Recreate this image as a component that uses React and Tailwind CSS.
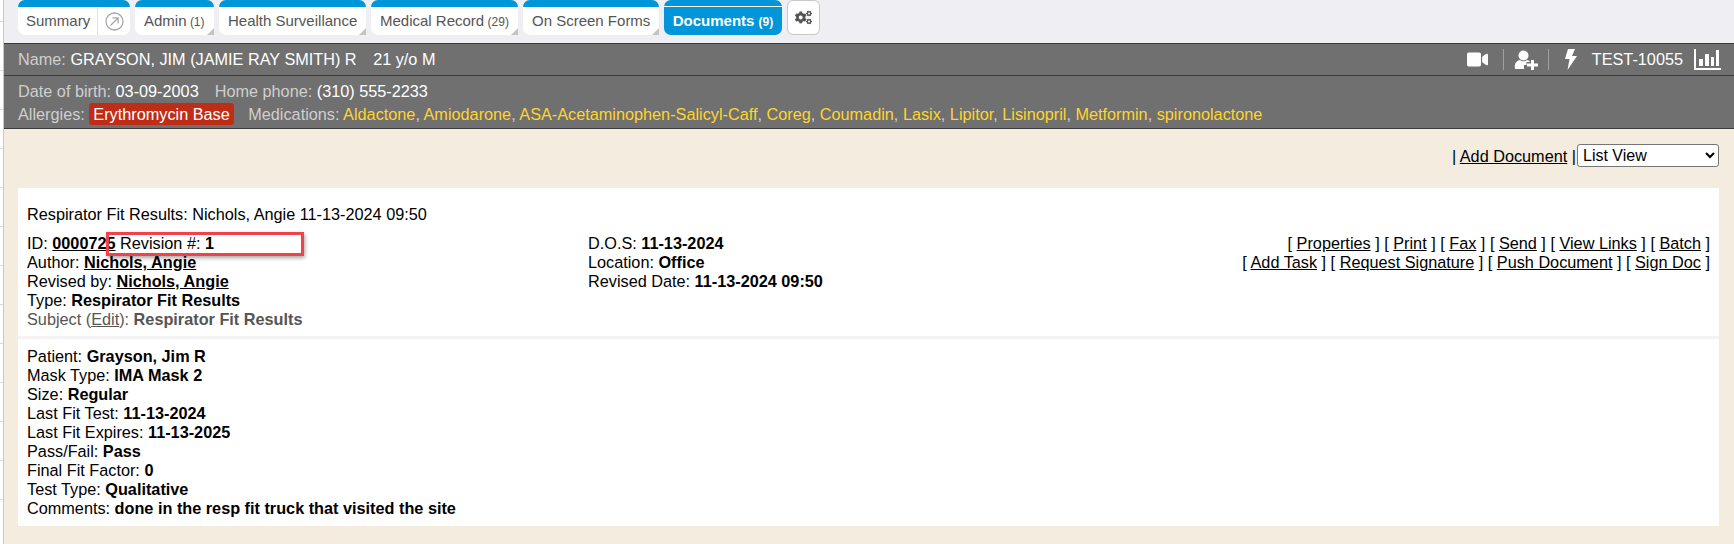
import { FaVideo, FaCogs } from "react-icons/fa";

const tabs = [
  { label: "Admin", count: "(1)", w: "w-[79px]" },
  { label: "Health Surveillance", w: "w-[147px]" },
  { label: "Medical Record", count: "(29)", w: "w-[147px]" },
  { label: "On Screen Forms", w: "w-[136px]" },
];

const meds = [
  "Aldactone",
  "Amiodarone",
  "ASA-Acetaminophen-Salicyl-Caff",
  "Coreg",
  "Coumadin",
  "Lasix",
  "Lipitor",
  "Lisinopril",
  "Metformin",
  "spironolactone",
];

const ticks = [21, 70, 109, 148, 187, 226, 265, 304, 343, 382, 421, 460, 499];

const fitRows = [
  ["Patient", "Grayson, Jim R"],
  ["Mask Type", "IMA Mask 2"],
  ["Size", "Regular"],
  ["Last Fit Test", "11-13-2024"],
  ["Last Fit Expires", "11-13-2025"],
  ["Pass/Fail", "Pass"],
  ["Final Fit Factor", "0"],
  ["Test Type", "Qualitative"],
  ["Comments", "done in the resp fit truck that visited the site"],
];

const Link = ({ children }) => <a className="underline">{children}</a>;

const Actions = ({ items }) => (
  <div>
    {items.map((item, i) => (
      <span key={item}>
        {i > 0 && " "}[ <Link>{item}</Link> ]
      </span>
    ))}
  </div>
);

const Corner = () => (
  <span className="absolute right-0 bottom-0 w-0 h-0 border-l-[7px] border-b-[7px] border-l-transparent border-b-[#c4c4c4]" />
);

const UserAdd = () => (
  <svg width="24" height="20" viewBox="0 0 24 20" fill="white">
    <circle cx="9.5" cy="5.5" r="5" />
    <path d="M1 19 C0 13 3 10.5 6 10 C8 11.8 11 11.8 13 10 C14.5 10.3 15.5 11 16 12 H12.5 V15 H10 V19 Z" />
    <path d="M17 10 H20 V13.5 H24 V16.5 H20 V20 H17 V16.5 H13 V13.5 H17 Z" />
  </svg>
);

const Bolt = () => (
  <svg width="13" height="21" viewBox="0 0 13 21" fill="white">
    <path d="M4 0 H11 L8 7 H13 L3.5 21 L5.5 10 H1 Z" />
  </svg>
);

const Bars = () => (
  <svg width="27" height="21" viewBox="0 0 27 21" fill="white">
    <rect x="0" y="0" width="2" height="21" />
    <rect x="0" y="19" width="27" height="2" />
    <rect x="5" y="10" width="4" height="7" />
    <rect x="11" y="5" width="4" height="12" />
    <rect x="17" y="8" width="3" height="9" />
    <rect x="22" y="1" width="3" height="16" />
  </svg>
);

export default function App() {
  return (
    <div className="flex h-[544px] w-[1734px] overflow-hidden bg-white font-['Liberation_Sans',Arial,sans-serif] text-[16.25px] leading-[19px] text-black">
      {/* left edge of the outer frame */}
      <div className="relative w-1 shrink-0 border-r border-[#c8c8c8]">
        {ticks.map((y) => (
          <div key={y} className="absolute left-0 w-[3px] h-px bg-[#d8d8d8]" style={{ top: y }} />
        ))}
      </div>

      <div className="flex-1 flex flex-col min-w-0">
        {/* Tabs */}
        <div className="h-[43px] bg-[#eeeef3] pl-[14px] flex items-start gap-[5px] shrink-0 text-[15px]">
          <div className="h-[35px] w-[112px] rounded-[7px] bg-white border-t-[7px] border-[#0096d9] flex text-[#555]">
            <span className="w-[79px] pl-[8px] pt-[4px]">Summary</span>
            <span className="flex-1 border-l border-[#e2e2e2] flex items-center justify-center">
              <svg width="19" height="19" viewBox="0 0 19 19" fill="none" stroke="#a8a8a8" strokeWidth="1.3">
                <circle cx="9.5" cy="9.5" r="8.5" />
                <path d="M5.5 13.5 L13 6 M7.5 5.8 H13.2 V11.5" />
              </svg>
            </span>
          </div>
          {tabs.map((t) => (
            <div
              key={t.label}
              className={`relative h-[35px] ${t.w} rounded-t-[7px] rounded-bl-[7px] bg-white border-t-[7px] border-[#0096d9] pl-[9px] pt-[4px] text-[#555] whitespace-nowrap`}
            >
              {t.label}
              {t.count && <span className="text-[12px]"> {t.count}</span>}
              <Corner />
            </div>
          ))}
          <div className="relative h-[35px] w-[118px] rounded-[7px] bg-[#0096d9] pt-[11px] text-center text-white font-bold whitespace-nowrap">
            <div className="absolute top-[6px] left-0 right-0 h-px bg-white" />
            Documents <span className="text-[12px]">(9)</span>
          </div>
          <div className="h-[35px] w-[33px] rounded-[6px] bg-white border border-[#c8c8c8] flex items-center justify-center">
            <FaCogs className="text-[#555] text-[17px]" />
          </div>
        </div>

        {/* Patient bar */}
        <div className="h-[33px] shrink-0 bg-[#707070] border-y border-[#3c3c3c] pl-[14px] pr-[13px] flex items-center justify-between text-[#cfcfcf]">
          <div className="whitespace-pre">
            Name: <span className="text-white">GRAYSON, JIM (JAMIE RAY SMITH) R{"   "}<span className="ml-[3px]">21 y/o M</span></span>
          </div>
          <div className="flex items-center text-white">
            <FaVideo className="text-[21px]" />
            <span className="w-px h-[21px] bg-[#a0a0a0] ml-[15px] mr-[10px]" />
            <UserAdd />
            <span className="w-px h-[21px] bg-[#a0a0a0] ml-[10px] mr-[15px]" />
            <Bolt />
            <span className="ml-[15px] mr-[11px]">TEST-10055</span>
            <Bars />
          </div>
        </div>
        <div className="h-[53px] shrink-0 bg-[#707070] border-b border-[#3c3c3c] pl-[14px] pt-[4px] leading-[22px] text-[#cfcfcf] whitespace-nowrap">
          <div>
            Date of birth: <span className="text-white">03-09-2003</span>
            <span className="ml-[16px]">Home phone: </span>
            <span className="text-white">(310) 555-2233</span>
          </div>
          <div className="mt-[1px]">
            Allergies: <span className="bg-[#bf2d17] text-white rounded-[3px] px-[4px] py-[2px] mr-[10px]">Erythromycin Base</span>
            {" "}Medications:{" "}
            {meds.map((m, i) => (
              <span key={m}>
                <span className="text-[#ffd52e]">{m}</span>
                {i < meds.length - 1 && ", "}
              </span>
            ))}
          </div>
        </div>

        {/* Documents */}
        <div className="flex-1 bg-[#f4ecde] pl-[14px] pr-[15px] relative">
          <div className="h-[59px] flex items-start justify-end pt-[15px] gap-[1px]">
            <span className="pt-[3px] whitespace-pre">
              | <Link>Add Document</Link> |
            </span>
            <select className="w-[142px] h-[23px] bg-white border border-[#767676] rounded-[3px] pl-[1px] text-[16px]" defaultValue="List View">
              <option>List View</option>
            </select>
          </div>

          <div className="bg-white">
            <div className="h-[151px] border-b-[3px] border-[#f3f3f3] px-[9px] pt-[17px]">
              <div className="mb-[10px]">Respirator Fit Results: Nichols, Angie 11-13-2024 09:50</div>
              <div className="flex">
                <div className="w-[561px] shrink-0">
                  <div>ID: <b className="underline">0000725</b> Revision #: <b>1</b></div>
                  <div>Author: <b className="underline">Nichols, Angie</b></div>
                  <div>Revised by: <b className="underline">Nichols, Angie</b></div>
                  <div>Type: <b>Respirator Fit Results</b></div>
                  <div className="text-[#555]">Subject (<span className="underline">Edit</span>): <b>Respirator Fit Results</b></div>
                </div>
                <div className="w-[400px] shrink-0">
                  <div>D.O.S: <b>11-13-2024</b></div>
                  <div>Location: <b>Office</b></div>
                  <div>Revised Date: <b>11-13-2024 09:50</b></div>
                </div>
                <div className="flex-1 text-right whitespace-nowrap">
                  <Actions items={["Properties", "Print", "Fax", "Send", "View Links", "Batch"]} />
                  <Actions items={["Add Task", "Request Signature", "Push Document", "Sign Doc"]} />
                </div>
              </div>
            </div>
            <div className="px-[9px] pt-[8px] pb-[8px]">
              {fitRows.map(([k, v]) => (
                <div key={k}>{k}: <b>{v}</b></div>
              ))}
            </div>
          </div>

          {/* annotation box from the screenshot */}
          <div className="absolute left-[102px] top-[103px] w-[198px] h-[24px] border-[3px] border-[#f0424a] shadow-[1px_2px_4px_rgba(0,0,0,0.35)]" />
        </div>
      </div>
    </div>
  );
}
